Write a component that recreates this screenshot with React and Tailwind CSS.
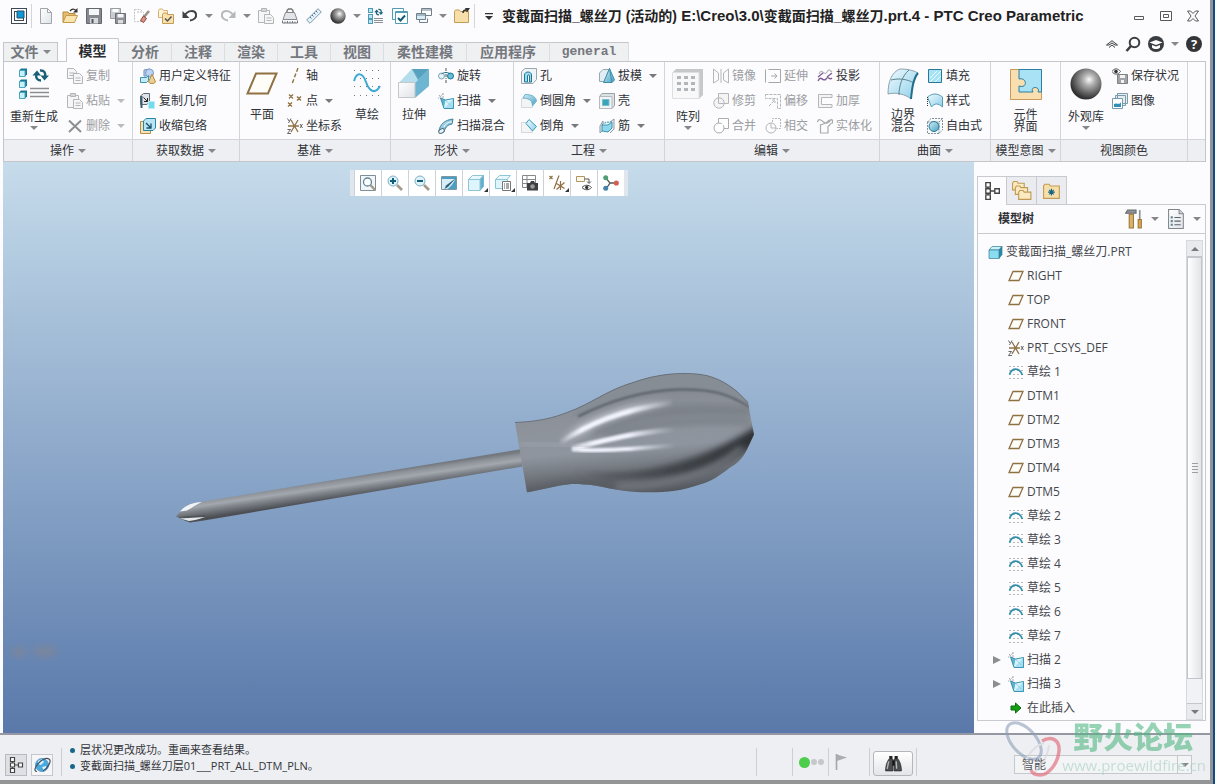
import React, { useState } from 'react';
import { clsx } from 'clsx';

const TEAL = '#1b7895';
const SKY = '#b9e4f4';
const TAN = '#8f7143';
const GRAY = '#8b8d90';

const Defs = () => (
  <svg width="0" height="0" className="absolute" aria-hidden="true">
    <defs>
      <radialGradient id="ball" cx="0.6" cy="0.36" r="0.62">
        <stop offset="0" stopColor="#fafafa" />
        <stop offset="0.3" stopColor="#b0b0b0" />
        <stop offset="0.7" stopColor="#666666" />
        <stop offset="1" stopColor="#303030" />
      </radialGradient>
      <linearGradient id="ice" x1="0" y1="0" x2="1" y2="1">
        <stop offset="0" stopColor="#eefaff" />
        <stop offset="1" stopColor="#8ed0e8" />
      </linearGradient>
      <linearGradient id="deep" x1="0" y1="0" x2="1" y2="1">
        <stop offset="0" stopColor="#d4effa" />
        <stop offset="1" stopColor="#4a9fc0" />
      </linearGradient>
      <linearGradient id="paper" x1="0" y1="0" x2="1" y2="1">
        <stop offset="0" stopColor="#ffffff" />
        <stop offset="1" stopColor="#dfe3e7" />
      </linearGradient>
    </defs>
  </svg>
);

const sheet = <path d="M2.500.5h7l4 4v11h-11z M9.500.5v4h4" fill="url(#paper)" stroke="#a2a6ab" />;
const folder = <path d="M.5 3.500l1-1.500h4l1 1.500h8v11H.5z" fill="#f6dfab" stroke="#c49c55" />;
const arrows = (
  <>
    <path d="M9 12.500C5 12.500 3.500 9.500 4.500 6.500M8 2.500C12 2 14 5 13 8.500" fill="none" stroke="#176178" strokeWidth="2.400" />
    <path d="M.5 7.500L5 2.500l4 5z M17 7.500L12.500 12.500l-4-5z" fill="#176178" />
  </>
);

const icons = {
  app: (
    <>
      <rect x=".5" y=".5" width="15" height="15" fill="#fff" stroke="#3c4854" />
      <rect x="3.500" y="3.500" width="9" height="9" fill="#fff" stroke="#3c4854" />
      <path d="M6 3h7v7H6z" fill="#0a9ad8" stroke="#27506c" />
    </>
  ),
  file: sheet,
  open: (
    <>
      <path d="M1 14V4h5l1 1.500h6V8" fill="#e5bd6c" stroke="#b58a3e" />
      <path d="M1 14.500L4 7.500h11.500l-3 7z" fill="#fae4ae" stroke="#c39a4e" />
      <path d="M8 3c2-2.500 4-2.500 6-.5" fill="none" stroke="#333" strokeWidth="1.300" />
      <path d="M15.500 0v4.500H11z" fill="#333" />
    </>
  ),
  save: (
    <>
      <path d="M.5.5h15v15H.5z" fill="#868a90" stroke="#63676d" />
      <path d="M3 1h10v6H3z" fill="#f5f6f8" />
      <path d="M4 10h8v5.500H4z" fill="#d8dadd" />
      <path d="M5.500 11h2v4h-2z" fill="#555" />
    </>
  ),
  saveAs: (
    <>
      <path d="M.5.5h10v10H.5z" fill="#c9ccd0" stroke="#999da3" />
      <path d="M2.500 1h6v3h-6z" fill="#fff" />
      <path d="M5.500 5.500h10v10h-10z" fill="#8f9399" stroke="#6b6f75" />
      <path d="M7.500 6h6v3.500h-6z" fill="#f5f6f8" />
      <path d="M8 12h5v3.500H8z" fill="#ddd" />
    </>
  ),
  erase: (
    <>
      <path d="M.5 1.500h6l3 3v9h-9z M3 4h5" fill="#fff" stroke="#bcc0c4" strokeDasharray="2 1" />
      <path d="M15 3l-5 6" stroke="#9a9085" strokeWidth="2.500" />
      <path d="M9.500 8l3 2.500-3 4-3-2z" fill="#d9958a" stroke="#8c3f35" />
    </>
  ),
  folderCheck: (
    <>
      <path d="M.5 2.500l1-1.500h3l1 1.500h4v7h-9z" fill="#fff4d6" stroke="#d2b074" />
      <path d="M4.500 6.500l1-1.500h3l1 1.500h6v9h-11z" fill="#f8e1aa" stroke="#c49c55" />
      <path d="M7 10.500l2.500 2.500 4-4.500" fill="none" stroke="#555" strokeWidth="1.500" />
    </>
  ),
  undo: (
    <>
      <path d="M3 7c3-5 10-5 11-1 .8 3.500-2 6-6 6.500" fill="none" stroke="#3e4348" strokeWidth="2" />
      <path d="M.5 3v7h7z" fill="#3e4348" />
    </>
  ),
  redo: (
    <g transform="matrix(-1 0 0 1 16 0)">
      <path d="M3 7c3-5 10-5 11-1 .8 3.500-2 6-6 6.500" fill="none" stroke="#b6b9bc" strokeWidth="2" />
      <path d="M.5 3v7h7z" fill="#b6b9bc" />
    </g>
  ),
  paste: (
    <g stroke="#b3b5b8" fill="#f6f6f7">
      <path d="M.5 2.500h11v12H.5z" />
      <path d="M3.500.5h5v3h-5z" fill="#d5d6d8" />
      <path d="M6.500 6.500h6l3 3v6h-9z" />
      <path d="M8.500 10h5M8.500 12.500h5" />
    </g>
  ),
  copy: (
    <g stroke="#b3b5b8" fill="#f6f6f7">
      <path d="M.5.5h6l3 3v7h-9z M2.500 5h5M2.500 7.500h5" />
      <path d="M6.500 5.500h6l3 3v7h-9z M8.500 10h5M8.500 12.500h5" />
    </g>
  ),
  remove: <path d="M2 2.500l12 11.500M14 2.500L2 14" stroke="#8d8f92" strokeWidth="2" />,
  weight: (
    <>
      <path d="M5 5V2.500L6.500 1h3L11 2.500V5" fill="none" stroke="#777" strokeWidth="1.400" />
      <path d="M3.500 4.500h9L15 11.500H1z" fill="#e2e4e7" stroke="#85898e" />
      <path d="M.5 15v-2.500M3 15v-1.500M5.500 15v-2M8 15v-1.500M10.500 15v-2M13 15v-1.500M15.500 15v-2.500M.5 15h15" stroke="#70757b" fill="none" />
    </>
  ),
  ruler: (
    <>
      <path d="M.7 12L12 .7 15.300 4 4 15.300z" fill="#e3f2fa" stroke="#7c96a8" />
      <path d="M4 9l1.500 1.500M6 7l1.500 1.500M8 5l1.500 1.500M10 3l1.500 1.500" stroke="#4e7188" />
    </>
  ),
  sphere: <circle cx="8" cy="8" r="7.700" fill="url(#ball)" />,
  regen: (
    <>
      {[0, 6, 11].map(y => <rect key={y} x=".5" y={y + 0.5} width="4" height="4" fill={SKY} stroke="#4d9bb2" />)}
      <path d="M6 10.500h9M6 12.500h9M6 14.500h9" stroke="#8a8f95" />
      <g transform="translate(6 0) scale(.55)">{arrows}</g>
    </>
  ),
  windowCheck: (
    <>
      <path d="M.5.5h11v11H.5z" fill="#fff" stroke="#4f9cb3" />
      <path d="M3.500 3.500h12v12h-12z" fill="#fff" stroke="#4f9cb3" />
      <path d="M3.500 4.500h12" stroke="#4f9cb3" />
      <path d="M6 10l2.500 2.500L13 7.500" fill="none" stroke="#115d75" strokeWidth="2" />
    </>
  ),
  windows: (
    <g fill="#fff" stroke="#70818e">
      <path d="M5.500.5h10v7h-10z M5.500 2h10" />
      <path d="M.5 5.500h9v6h-9z M.5 7h9" fill="#d8edf6" />
      <path d="M3.500 11.500v3h8v-4" fill="none" />
    </g>
  ),
  folderClose: (
    <>
      {folder}
      <path d="M9 5c0-2 1-3 3-3" stroke="#333" strokeWidth="1.400" fill="none" />
      <path d="M11 0h5l-3 4.500z" fill="#333" />
    </>
  ),
  userFeature: (
    <>
      <path d="M4 2l6-1v7H4z" fill="#c8daf0" stroke="#6b8fbb" />
      <circle cx="9.500" cy="5" r="4" fill="#bcd3f1" stroke="#7b9cc8" />
      <path d="M.5 9.500h6l2-2v5l-2 2h-6z" fill="#c2ebf5" stroke="#3b93ae" />
      <path d="M12 6l3.500 8c-1.500 2-5.500 2-7 0z" fill="#ebcf94" stroke="#b38b45" />
    </>
  ),
  copyGeometry: (
    <>
      <path d="M.5 3l3-2.500h6V9l-2.500 2.500H.5z" fill="#dfe3e7" stroke="#5c6c78" />
      <path d="M.5 3h2v12h-2z" fill="#3f6074" />
      <path d="M3.500 4.500l4 4M7.500 5v3.500H4" stroke="#222" fill="none" />
      <path d="M8.500 8.500h6v7h-6z" fill="#72dcee" stroke="#b9edf5" />
    </>
  ),
  shrinkwrap: (
    <>
      <path d="M.5 3.500h10v12H.5z" fill="#f7e2b6" stroke="#b98e47" />
      <path d="M3.500 3l2.500-2.500h9.500V10L13 12.500H3.500z" fill={SKY} stroke="#2c86a2" />
      <path d="M6 5l5 5M11 5.500V10H6.500" stroke="#16506a" fill="none" strokeWidth="1.300" />
    </>
  ),
  axis: <path d="M11 0L5 16" stroke={TAN} strokeWidth="1.400" strokeDasharray="4 2" />,
  point: (
    <path d="M2 1.500l4 4M6 1.500l-4 4M10 3.500l4 4M14 3.500l-4 4M1 9.500l4 4M5 9.500l-4 4" stroke={TAN} strokeWidth="1.300" />
  ),
  csys: (
    <>
      <path d="M4 2l7 12M11 2L4 14M1 8h11" stroke={TAN} strokeWidth="1.300" />
      <path d="M.5.5L2 3M4 .5L1.500 5M.5 11.500H3.500L.5 15.500H4M13 6l2.500 4M15.500 6l-2.500 4" stroke="#555" fill="none" strokeWidth=".9" />
    </>
  ),
  revolve: (
    <>
      <ellipse cx="3.500" cy="8" rx="3" ry="3" fill="#e3f4fa" stroke="#7fa3b2" />
      <ellipse cx="12.500" cy="8" rx="3" ry="3" fill="#68bed8" stroke={TEAL} />
      <path d="M3.500 6c3-2 6-2 9 0" fill="none" stroke={TEAL} />
      <path d="M8 0v16" stroke="#555" strokeDasharray="3 1 1 1" />
    </>
  ),
  sweep: (
    <>
      <path d="M2.500 5l5 2 8-1.500v10H6z" fill="#a8e0f1" />
      <path d="M2.500 5l5 2L6 15.500z" fill="#5fb3cf" />
      <path d="M7.500 7l8-1.500L6 15.500z" fill="#d8f4fb" />
      <path d="M7.500 7l8 8.500" stroke="#8fc9dc" strokeWidth=".8" />
      <path d="M2.500 5l5 2 8-1.500v10H6z" fill="none" stroke="#2a8bab" strokeWidth=".9" />
      <path d="M0 5.500L5 1M1 2l4 5M5 0v5" stroke="#8b9298" strokeWidth=".8" strokeDasharray="2 1" />
    </>
  ),
  sweptBlend: (
    <>
      <path d="M1 13c1-7 6-11 14-12l-1 5c-5 1-7 4-8 8z" fill="url(#deep)" stroke="#39829b" />
      <ellipse cx="3.500" cy="13" rx="3" ry="2" fill="#e5f4f9" stroke="#50717f" transform="rotate(-30 3.500 13)" />
      <path d="M6 9c2-4 5-5 8-5" fill="none" stroke="#fff" />
    </>
  ),
  hole: (
    <>
      <path d="M.5 3.500L4 .5h11.500v11l-3.500 4H.5z" fill="#eef4f7" stroke="#9ba5ac" />
      <path d="M3.500 14V7c0-4 7-4 7 0v7z" fill="#9edced" stroke={TEAL} />
      <path d="M6.500 14V8c0-1.500 2-1.500 2 0v6" fill="#fff" stroke={TEAL} />
    </>
  ),
  round: (
    <>
      <path d="M.5 5.500h6c4 0 5 3 5 9H.5z" fill="#f2f4f5" stroke="#d5d9dc" />
      <path d="M4 1.500c8 0 11 3 11.500 6.500l-4 5C11.500 8 9 5.500 2 5z" fill="url(#deep)" stroke="#6cb4cb" />
    </>
  ),
  chamfer: (
    <>
      <path d="M.5 4.500h6l5 5v5H.5z" fill="#f2f4f5" stroke="#d5d9dc" />
      <path d="M8 1.500l7.500 7-4 4.500L5 5.500z" fill="url(#ice)" stroke="#3a9ab8" />
    </>
  ),
  draft: (
    <>
      <path d="M.5 5L4 1.500h6l-4 12H.5z" fill="#e1edf3" stroke="#96a9b3" />
      <path d="M10.500.5l5 11.500-2.500 2.500H4.500z" fill="url(#deep)" stroke="#3a8faa" />
      <path d="M10.500.5l2.500 14" stroke="#3a8faa" />
    </>
  ),
  shell: (
    <>
      <path d="M.5 3.500L3 .5h12.500v12l-2.500 3H.5z" fill="#dde2e5" stroke="#9aa1a7" />
      <path d="M.5 3.500H13v12H.5z" fill="#f1f3f5" stroke="#b5babe" />
      <path d="M3.500 6.500H10v6H3.500z" fill="#3aa5b8" stroke="#74bfcb" />
    </>
  ),
  rib: (
    <>
      <path d="M1 8l3-5v9l-3 3z M10 5l5-4v10l-4 4" fill="#eef1f3" stroke="#8b98a0" />
      <path d="M3 13V7h6l4-3v6l-4 4z" fill="#8fd7ec" stroke="#3d93ad" />
      <path d="M3 7l4-3h6" fill="#c9effa" stroke="#3d93ad" strokeDasharray="2 1" />
    </>
  ),
  mirror: <path d="M.5 1v14l5-3V5z M15.500 1v14l-5-3V5z M8 1v14" fill="#fafafa" stroke="#b4b6b9" />,
  extend: <path d="M3.500 1.500h12v13h-12M.5 1.500v13M6 8h6M9.500 5.500L12 8l-2.500 2.500" fill="none" stroke="#a4a6a9" />,
  project: (
    <>
      <path d="M2 6c3-7 5 3 8-2s3 1 5-1" fill="none" stroke="#b9b4bd" strokeWidth="1.200" />
      <path d="M1 13c3-7 5 2 8-2s3 2 6-1M1 9l5-4M10 9l5-4" fill="none" stroke="#7b5a8f" strokeWidth="1.300" />
    </>
  ),
  trim: (
    <g fill="#f4f4f5" stroke="#b4b6b9">
      <path d="M5.500.5h10v10h-10z" />
      <circle cx="6" cy="10" r="5.200" />
      <path d="M5.500 5v5.500H11" />
    </g>
  ),
  offset: <path d="M.5 1.500h15v14h-3V5.500h-12z M4 13l6-6M7 7h3v3" fill="none" stroke="#b4b6b9" strokeDasharray="3 1" />,
  thicken: <path d="M15 1.500H1.500v13H15v-3H4.500v-7H15z" fill="#f4f4f5" stroke="#b4b6b9" />,
  merge: (
    <g fill="#fff" stroke="#aaacaf">
      <path d="M5.500.5h10v10h-10z" />
      <circle cx="6" cy="10" r="5" />
      <path d="M6 6h4v4H6z" stroke="none" />
    </g>
  ),
  intersect: (
    <g fill="none" stroke="#b4b6b9">
      <path d="M7.500 4V.5h8v10h-4" strokeDasharray="2 1" />
      <circle cx="6" cy="10" r="5" />
      <path d="M6 5v5h5" />
    </g>
  ),
  solidify: <path d="M3.500 15V7l4-1.500c3 0 2-4 8-3.500v3c-3 0-2 2.500-4.500 3.500v6.500z M.5 4c1-4 4-2 6 0s5 2 8-3" fill="none" stroke="#a9abae" strokeWidth="1.200" />,
  fill: (
    <>
      <path d="M1.500 1.500h13v13h-13z" fill="#a6e3f5" stroke="#2c7894" />
      <path d="M3 10l7-7M3 14L14 3M8 14l6-6" stroke="#eefbff" />
    </>
  ),
  style: (
    <>
      <path d="M.5 4c5-4 10-4 15 0v10c-4-4-8-4-11 0z" fill="url(#ice)" stroke="#5a9cb5" />
      <path d="M.5 4v10" stroke="#333" strokeDasharray="1 1" />
    </>
  ),
  freestyle: (
    <>
      <path d="M.5 4L4 .5h11.500V12L12 15.500H.5z M.5 4H12v11.500M12 4l3.500-3.500" fill="none" stroke="#7c8f9b" strokeDasharray="2 1" />
      <circle cx="7" cy="8.500" r="5" fill="url(#deep)" stroke={TEAL} />
    </>
  ),
  saveStatus: (
    <>
      <path d="M0 3.500c2-3.500 6-3.500 8.500 0C6 7 2 7 0 3.500z" fill="#fff" stroke="#555" />
      <circle cx="4" cy="3.500" r="1.800" fill="#333" />
      <path d="M5.500 6.500h10v9h-10z" fill="#a0a4a9" stroke="#7d8186" />
      <path d="M8 7h5v3H8z M9 12h3v3H9z" fill="#f3f3f3" />
    </>
  ),
  images: (
    <>
      <path d="M5.500.5h10v10h-10z M3.500 2.500h10v10h-10z" fill="#e6edf1" stroke="#7b9aaa" />
      <path d="M.5 5.500h10v10H.5z" fill="#fff" stroke="#7b9aaa" />
      <path d="M2 11c3-2 5 2 7-2v5H2z" fill="#2f8fb5" />
    </>
  ),
  zoomFit: (
    <>
      <path d="M.5.5h15v15H.5z" fill="#f1f6f9" stroke="#7f8d97" />
      <circle cx="7.500" cy="7" r="4" fill="#fff" stroke="#5f8799" strokeWidth="1.300" />
      <path d="M10.500 10l4.500 5" stroke="#a39a8c" strokeWidth="2.500" />
    </>
  ),
  zoomIn: (
    <>
      <circle cx="6" cy="6" r="5" fill="#dff3fa" stroke="#7fb0c2" />
      <path d="M3 6h6M6 3v6" stroke="#135e78" strokeWidth="2" />
      <path d="M10 10l5 5" stroke="#a39a8c" strokeWidth="2.600" />
    </>
  ),
  zoomOut: (
    <>
      <circle cx="6" cy="6" r="5" fill="#dff3fa" stroke="#7fb0c2" />
      <path d="M3 6h6" stroke="#135e78" strokeWidth="2" />
      <path d="M10 10l5 5" stroke="#a39a8c" strokeWidth="2.600" />
    </>
  ),
  repaint: (
    <>
      <path d="M.5 1.500h15v13H.5z" fill="#d8ecf5" stroke="#7d96a4" />
      <path d="M15 2v12H6c3-1 7-6 9-12z" fill="#4b9fc0" />
      <path d="M1 2h14v2H1z" fill="#4b9fc0" />
      <path d="M15 3L7 12l-3.500 2L5 10.500z" fill="#2f617a" />
    </>
  ),
  cube: (
    <>
      <path d="M.5 4.500l4-4h11l-3.500 4z" fill="#e6f8fe" stroke="#8cc4d8" />
      <path d="M12 4.500L15.500.5v11l-3.500 4z" fill="#5fb0cd" stroke="#7db7cc" />
      <path d="M.5 4.500H12v11H.5z" fill="#dff5fc" stroke="#8cc4d8" />
    </>
  ),
  savedViews: (
    <>
      <path d="M.5 4.500l4-4h11l-3.500 4z" fill="#e6f8fe" stroke="#8cc4d8" />
      <path d="M.5 4.500h12v9H.5z" fill="#dff5fc" stroke="#8cc4d8" />
      <path d="M7.500 6.500h8v9h-8z" fill="#fff" stroke="#777" />
      <path d="M9 9h1M11 9h3M9 11h1M11 11h3M9 13h1M11 13h3" stroke="#555" />
    </>
  ),
  viewManager: (
    <>
      <path d="M.5.5h13v12H.5z M.5 4.500h13M.5 8.500h13M5 .5v12" fill="#fff" stroke="#888" />
      <path d="M5 8h3l1-2h3l1 2h3v7.500H5z" fill="#3b3f43" />
      <circle cx="10.500" cy="11.500" r="2.300" fill="#999" />
    </>
  ),
  datumFilter: (
    <path d="M.5 1l3 3M3.500 1l-3 3M10 .5L5 14M11.500 6v9M7.500 8.500l8 5M15.500 7.500l-8 7" stroke={TAN} strokeWidth="1.200" />
  ),
  annotation: (
    <>
      <path d="M.5 1.500h8v5h-8z" fill="#fff9ec" stroke="#b39663" />
      <path d="M8.500 4H13v4M11 6.500l2 2 2-2" fill="none" stroke="#555" />
      <path d="M6 12.500c2.500-3 7-3 9.500 0-2.500 3-7 3-9.500 0z" fill="#fff" stroke="#444" />
      <circle cx="10.700" cy="12.500" r="1.700" fill="#333" />
    </>
  ),
  spin: (
    <>
      <path d="M2.500 2.500L7 8l-4 6M7 8h7" fill="none" stroke="#555" strokeWidth="1.300" />
      <circle cx="2.700" cy="2.700" r="2.500" fill="#4f9f74" />
      <circle cx="2.700" cy="13.300" r="2.500" fill="#4583ad" />
      <circle cx="13.300" cy="8" r="2.600" fill="#d45f55" />
    </>
  ),
  tree: (
    <path d="M2.500.5h4v4h-4z M2.500 6h4v4h-4z M2.500 11.500h4v4h-4z M10.500 6h4v4h-4z M4.500 4.500V6M4.500 10v1.500M6.500 8h4" fill="#fff" stroke="#444" strokeWidth="1.200" />
  ),
  folders: (
    <g fill="#fbeac0" stroke="#c09a55">
      <path d="M.5 2l1-1.500h3l1 1.500H11v6H.5z" />
      <path d="M3 6l1-1.500h3L8 6h6v6H3z" />
      <path d="M6 10l1-1.500h3L11 10h6v6.500H6z" />
    </g>
  ),
  favorites: (
    <>
      {folder}
      <path d="M7.500 6v6M4.500 9h6M5.500 7l4 4M9.500 7l-4 4" stroke="#176480" />
    </>
  ),
  tools: (
    <>
      <path d="M.5 4l2-3h8v3z" fill="#8d9298" stroke="#65696d" />
      <path d="M4 5h4v13H4z" fill="#d9b36a" stroke="#9a7433" />
      <path d="M14 1v9" stroke="#8c9196" strokeWidth="1.600" />
      <path d="M12.500 10h3v8h-3z" fill="#dba94f" stroke="#9a7433" />
    </>
  ),
  settings: (
    <>
      <path d="M1.500.5h10l4 4v14h-14z" fill="url(#paper)" stroke="#80868c" />
      <path d="M11.500.5v4h4" fill="#cdd4da" stroke="#80868c" />
      <path d="M7 8h6M7 11.500h6M7 15h6" stroke="#5c646b" />
      <path d="M3.500 7h2v2h-2z M3.500 10.500h2v2h-2z M3.500 14h2v2h-2z" fill="#5c8396" />
    </>
  ),
  part: (
    <>
      <path d="M2 6l3-3.500h10l-3 3.500z" fill="#c9f1fa" stroke="#357e96" strokeWidth=".7" />
      <path d="M12 6l3-3.500v8l-3 4z" fill="#2589aa" stroke="#357e96" strokeWidth=".7" />
      <path d="M2 6h10v8.500H2z" fill="#8adcf0" stroke="#357e96" strokeWidth=".7" />
    </>
  ),
  plane: <path d="M5 3.500h10L11 12.500H1z" fill="#fffdf8" stroke={TAN} strokeWidth="1.300" />,
  sketch: (
    <>
      <path d="M1.500 2.500h14M1.500 6.500h14M1.500 10.500h14M1.500 14.500h14" stroke="#777" strokeDasharray="1 3" />
      <path d="M1.500 10.500C4 3.500 11 3 14.500 11" fill="none" stroke="#2d8fab" strokeWidth="1.700" />
    </>
  ),
  insert: <path d="M3 6h4.500V3L13 8l-5.500 5V10H3z" fill="#12a012" stroke="#0a6f0a" />,
  globe: (
    <>
      <circle cx="9" cy="9" r="6.500" fill="#49a9dd" stroke="#5aa0cc" />
      <path d="M5 5l4-2 2 3-3 3-3-1z M9 11l4-1 1 2-3 3z" fill="#d5f0fb" />
      <path d="M4 15.500C-3 15 10-1 16 3c3 2-1 9-6 12" fill="none" stroke="#3c4f5f" strokeWidth="1.200" />
    </>
  ),
  binoculars: (
    <>
      <path d="M4 1h3v3H4z M9 1h3v3H9z" fill="#222" />
      <path d="M3.500 4h4v11H.5c0-4 1-8 3-11z M8.500 4h4c2 3 3 7 3 11h-7z" fill="#4b4e51" stroke="#222" strokeWidth=".6" />
      <path d="M7 5h2v5H7z" fill="#111" />
      <path d="M2 13l1.500-7M10.500 6l.5 7" stroke="#b5b8ba" strokeWidth="1.300" />
    </>
  ),
};

const bigIcons = {
  regen: (
    <>
      {[0, 11, 22].map(y => (
        <g key={y} transform={`translate(0 ${y})`}>
          <path d="M1 2.500L3 .5h6v6l-2 2H1z" fill={TEAL} />
          <path d="M1.500 2.500H7v6H1.500z" fill="#c8f0fa" stroke="#4aa6c0" />
        </g>
      ))}
      <path d="M12 20.500h19M12 24.500h19M12 28.500h19" stroke="#8a8d91" strokeWidth="1.300" />
      <g transform="translate(14 0)">{arrows}</g>
    </>
  ),
  plane: <path d="M10 5.500h20.500L22 25.500H1.500z" fill="#fffdf8" stroke={TAN} strokeWidth="2" />,
  sketch: (
    <>
      <path d="M3 2.500h26M3 10.500h26M3 18.500h26M3 27.500h26" stroke="#777" strokeDasharray="1 5" />
      <path d="M3 13C6 3 12 5 15 14s9 13 14 4" fill="none" stroke="#3ba9d3" strokeWidth="2" />
    </>
  ),
  extrude: (
    <>
      <path d="M1 15L14 1h17L17 15z" fill="#8cc8df" />
      <path d="M1 15L14 1l8 9-5 5z" fill="#c5e6f2" opacity=".7" />
      <path d="M17 15L31 1v17L17 30z" fill="#6db5d0" />
      <path d="M14 1h17L20 12z" fill="#3f8fb2" opacity=".7" />
      <path d="M.5 14.500H17v15H.5z" fill="url(#paper)" stroke="#c3c7ca" />
    </>
  ),
  pattern: (
    <>
      <path d="M1 4l3-3h27v26l-4 4z" fill="#c6c8ca" />
      <path d="M.5 4.500H27v26H.5z" fill="#f8f8f9" stroke="#dcdee0" />
      {[8, 14, 20].map(y => (
        <path key={y} d={`M5 ${y}h4v3H5z M12 ${y}h4v3h-4z M19 ${y}h4v3h-4z`} fill="#b3b6b9" />
      ))}
    </>
  ),
  boundary: (
    <>
      <path d="M1 26C1 13 5 4 13 1c7 0 13 1 18 4-5 6-6 16-7 26-6-5-15-7-23-5z" fill="url(#ice)" stroke="#8fa3ae" />
      <path d="M4 12c8-2 16-1 23 3M22 2c-7 6-10 16-10 25" fill="none" stroke="#5b8294" />
      <path d="M31 5c-5 6-6 16-7 26" fill="none" stroke="#226f8d" strokeWidth="2" />
    </>
  ),
  component: (
    <>
      <path d="M.5 1.500h31v30H.5z" fill="#f9dfb0" stroke="#c69a5b" />
      <path d="M9 1.500h22.500V24H28c3-6-9-6-5 0H9v-6c9 3 8-9 0-7z" fill="#a9e2f5" stroke="#2b7f9e" />
    </>
  ),
  appearance: <circle cx="16" cy="16" r="15.500" fill="url(#ball)" />,
};

const Icon = ({ name, className = 'h-4 w-4', box = 16 }) => (
  <svg viewBox={`0 0 ${box} ${box}`} className={clsx('shrink-0', className)} aria-hidden="true">
    {icons[name]}
  </svg>
);

const Caret = ({ className = 'text-[#85878b]' }) => (
  <svg viewBox="0 0 8 4" className={clsx('h-1 w-2 shrink-0', className)} aria-hidden="true">
    <path d="M0 0h8L4 4z" fill="currentColor" />
  </svg>
);

const quickAccess = [
  { icon: 'file', label: '新建' },
  { icon: 'open', label: '打开' },
  { icon: 'save', label: '保存' },
  { icon: 'saveAs', label: '另存为' },
  { icon: 'erase', label: '拭除' },
  { icon: 'folderCheck', label: '工作目录' },
  { icon: 'undo', label: '撤消', caret: true },
  { icon: 'redo', label: '重做', caret: true },
  { icon: 'paste', label: '粘贴' },
  { icon: 'weight', label: '质量属性' },
  { icon: 'ruler', label: '测量' },
  { icon: 'sphere', label: '外观', caret: true },
  { icon: 'regen', label: '重新生成' },
  { icon: 'windowCheck', label: '激活窗口' },
  { icon: 'windows', label: '窗口', caret: true },
  { icon: 'folderClose', label: '关闭' },
];

const TitleBar = () => (
  <header className="flex h-8 items-center pl-[11px] pr-1">
    <Icon name="app" />
    <span className="ml-1 h-6 w-px bg-[#d4d5d9]" />
    <div className="ml-0.5 flex items-center">
      {quickAccess.map(item => (
        <React.Fragment key={item.icon}>
          <button type="button" aria-label={item.label} className="grid h-6 w-6 place-items-center">
            <Icon name={item.icon} />
          </button>
          {item.caret && (
            <button type="button" aria-label={`${item.label}选项`} className="grid h-6 w-[14px] place-items-center">
              <Caret />
            </button>
          )}
        </React.Fragment>
      ))}
    </div>
    <span className="h-6 w-px bg-[#d4d5d9]" />
    <button type="button" aria-label="自定义快速访问工具栏" className="grid h-6 w-[27px] place-items-center">
      <svg viewBox="0 0 8 7" className="h-[7px] w-2"><path d="M0 0h8v1.200H0z M0 3h8L4 7z" fill="#333" /></svg>
    </button>
    <h1 className="min-w-0 flex-1 truncate font-['Liberation_Sans','Noto_Sans_CJK_SC',sans-serif] text-[15px] font-bold leading-5 text-[#222]">
      <span className="text-[14px]">变截面扫描_螺丝刀 (活动的)</span>
      {' E:\\Creo\\3.0\\'}
      <span className="text-[14px]">变截面扫描_螺丝刀</span>
      .prt.4 - PTC Creo Parametric
    </h1>
    <button type="button" aria-label="最小化" className="grid h-6 w-[27px] place-items-center">
      <svg viewBox="0 0 10 10" className="h-[10px] w-[10px]"><path d="M.5 5.500h9v3h-9z" fill="none" stroke="#55585c" /></svg>
    </button>
    <button type="button" aria-label="最大化" className="grid h-6 w-[27px] place-items-center">
      <svg viewBox="0 0 12 10" className="h-[10px] w-3"><path d="M.5.5h11v9H.5z M3.500 3.500h5v3h-5z" fill="none" stroke="#55585c" /></svg>
    </button>
    <button type="button" aria-label="关闭窗口" className="grid h-6 w-[27px] place-items-center">
      <svg viewBox="0 0 12 12" className="h-3 w-3"><path d="M.5 1h3L6 3.500 8.500 1h3L8 6l3.500 5h-3L6 8.500 3.500 11h-3L4 6z" fill="none" stroke="#55585c" /></svg>
    </button>
  </header>
);

const tabs = [
  { label: '模型', width: 'w-[53px]' },
  { label: '分析', width: 'w-[53px]' },
  { label: '注释', width: 'w-[53px]' },
  { label: '渲染', width: 'w-[53px]' },
  { label: '工具', width: 'w-[53px]' },
  { label: '视图', width: 'w-[53px]' },
  { label: '柔性建模', width: 'w-[83px]' },
  { label: '应用程序', width: 'w-[83px]' },
  { label: 'general', width: 'w-[79px]', mono: true },
];

const TabRow = ({ active, onSelect }) => (
  <nav className="flex h-[29px] items-end pl-[3px] pr-1 text-[14px] font-bold text-[#74777d]">
    <button type="button" className="flex h-[19px] w-[55px] items-center justify-center gap-1 border border-b-0 border-[#c5c6ca] bg-[#eff0f2] leading-[18px]">
      文件
      <Caret />
    </button>
    <div className="ml-2 flex items-end">
      {tabs.map(tab => (
        <button
          key={tab.label}
          type="button"
          onClick={() => onSelect(tab.label)}
          className={clsx(
            'border-t border-[#c5c6ca]',
            tab.width,
            tab.mono && "font-['Liberation_Mono',monospace] text-[13px]",
            active === tab.label
              ? 'relative z-10 -mb-px h-6 rounded-t-[2px] border-x bg-[#fcfcfe] text-[#2c2e33]'
              : 'h-[19px] border-r border-r-[#dcdde0] bg-[#eff0f2] leading-[18px]'
          )}
        >
          {tab.label}
        </button>
      ))}
    </div>
    <div className="ml-auto flex h-full items-center pb-[5px]">
      <button type="button" aria-label="最小化功能区" className="grid h-5 w-5 place-items-center">
        <svg viewBox="0 0 12 8" className="h-2 w-3"><path d="M.5 5L6 .7 11.500 5H9L6 3 3 5z M3 7.500L6 5l3 2.500" fill="none" stroke="#3c3f44" /></svg>
      </button>
      <button type="button" aria-label="搜索" className="grid h-5 w-[22px] place-items-center">
        <svg viewBox="0 0 16 16" className="h-4 w-4"><circle cx="9.500" cy="6.500" r="4.800" fill="none" stroke="#3a3d42" strokeWidth="2" /><path d="M6 10l-4.500 5" stroke="#3a3d42" strokeWidth="2.600" /></svg>
      </button>
      <button type="button" aria-label="学习中心" className="grid h-5 w-6 place-items-center">
        <svg viewBox="0 0 16 16" className="h-4 w-4"><circle cx="8" cy="8" r="8" fill="#3a3d42" /><path d="M1.500 6.500L8 4l6.500 2.500L8 9z M4 9l4 1.500L12 9v2.500c-2 2-6 2-8 0z" fill="#fff" /></svg>
      </button>
      <span className="grid w-[14px] place-items-center"><Caret /></span>
      <button type="button" aria-label="帮助" className="grid h-5 w-6 place-items-center">
        <span className="grid h-4 w-4 place-items-center rounded-full bg-[#333539] text-[13px] leading-4 text-white">?</span>
      </button>
    </div>
  </nav>
);

const Tool = ({ icon, label, caret, disabled }) => (
  <button
    type="button"
    disabled={disabled}
    className={clsx('flex h-[25px] items-center gap-[3px] whitespace-nowrap', disabled ? 'text-[#9b9da1]' : 'text-[#303338]')}
  >
    <Icon name={icon} />
    {label}
    {caret && <span className="ml-1 flex"><Caret className={disabled ? 'text-[#b9bbbe]' : 'text-[#77797d]'} /></span>}
  </button>
);

const Column = ({ items }) => (
  <div className="flex flex-col items-start pt-px">
    {items.map(item => <Tool key={item.label} {...item} />)}
  </div>
);

// twoLine labels wrap after the second character
const BigTool = ({ icon, label, twoLine, caret, className = 'w-8' }) => (
  <button type="button" className={clsx('flex flex-col items-center pt-[6px] text-[#303338]', className)}>
    <svg viewBox="0 0 32 32" className="h-8 w-8 shrink-0" aria-hidden="true">{bigIcons[icon]}</svg>
    <span className={clsx('mt-[9px] leading-3', twoLine ? 'w-6' : 'whitespace-nowrap', caret && 'pt-0.5')}>{label}</span>
    {caret && <span className="mt-[3px] flex"><Caret /></span>}
  </button>
);

const Group = ({ label, caret = true, width, className = 'gap-2 pl-[7px]', children }) => (
  <section className={clsx('flex flex-col border-r border-[#d3d4d8]', width)}>
    <div className={clsx('flex h-[77px] items-start', className)}>{children}</div>
    <div className="flex h-[22px] items-center justify-center gap-1 whitespace-nowrap border-t border-[#d3d4d8] bg-[#eeeff2] text-[#303338]">
      {label}
      {caret && <Caret />}
    </div>
  </section>
);

const Ribbon = () => (
  <div className="ml-[3px] mr-1 flex border border-[#c5c6ca] text-[12px]">
    <Group label="操作" width="w-[129px] shrink-0" className="gap-[6px] pl-[3px]">
      <BigTool icon="regen" label="重新生成" caret className="w-[54px]" />
      <Column
        items={[
          { icon: 'copy', label: '复制', disabled: true },
          { icon: 'paste', label: '粘贴', disabled: true, caret: true },
          { icon: 'remove', label: '删除', disabled: true, caret: true },
        ]}
      />
    </Group>
    <Group label="获取数据" width="w-[107px] shrink-0">
      <Column
        items={[
          { icon: 'userFeature', label: '用户定义特征' },
          { icon: 'copyGeometry', label: '复制几何' },
          { icon: 'shrinkwrap', label: '收缩包络' },
        ]}
      />
    </Group>
    <Group label="基准" width="w-[151px] shrink-0" className="gap-[9px] pl-[6px]">
      <BigTool icon="plane" label="平面" />
      <Column
        items={[
          { icon: 'axis', label: '轴' },
          { icon: 'point', label: '点', caret: true },
          { icon: 'csys', label: '坐标系' },
        ]}
      />
      <BigTool icon="sketch" label="草绘" />
    </Group>
    <Group label="形状" width="w-[123px] shrink-0">
      <BigTool icon="extrude" label="拉伸" />
      <Column
        items={[
          { icon: 'revolve', label: '旋转' },
          { icon: 'sweep', label: '扫描', caret: true },
          { icon: 'sweptBlend', label: '扫描混合' },
        ]}
      />
    </Group>
    <Group label="工程" width="w-[151px] shrink-0">
      <Column
        items={[
          { icon: 'hole', label: '孔' },
          { icon: 'round', label: '倒圆角', caret: true },
          { icon: 'chamfer', label: '倒角', caret: true },
        ]}
      />
      <Column
        items={[
          { icon: 'draft', label: '拔模', caret: true },
          { icon: 'shell', label: '壳' },
          { icon: 'rib', label: '筋', caret: true },
        ]}
      />
    </Group>
    <Group label="编辑" width="w-[215px] shrink-0" className="gap-[9px] pl-[7px]">
      <BigTool icon="pattern" label="阵列" caret />
      <Column
        items={[
          { icon: 'mirror', label: '镜像', disabled: true },
          { icon: 'trim', label: '修剪', disabled: true },
          { icon: 'merge', label: '合并', disabled: true },
        ]}
      />
      <Column
        items={[
          { icon: 'extend', label: '延伸', disabled: true },
          { icon: 'offset', label: '偏移', disabled: true },
          { icon: 'intersect', label: '相交', disabled: true },
        ]}
      />
      <Column
        items={[
          { icon: 'project', label: '投影' },
          { icon: 'thicken', label: '加厚', disabled: true },
          { icon: 'solidify', label: '实体化', disabled: true },
        ]}
      />
    </Group>
    <Group label="曲面" width="w-[111px] shrink-0">
      <BigTool icon="boundary" label="边界混合" twoLine />
      <Column
        items={[
          { icon: 'fill', label: '填充' },
          { icon: 'style', label: '样式' },
          { icon: 'freestyle', label: '自由式' },
        ]}
      />
    </Group>
    <Group label="模型意图" width="w-[70px] shrink-0" className="justify-center">
      <BigTool icon="component" label="元件界面" twoLine />
    </Group>
    <Group label="视图颜色" caret={false} width="w-[127px] shrink-0">
      <BigTool icon="appearance" label="外观库" caret className="w-9" />
      <Column
        items={[
          { icon: 'saveStatus', label: '保存状况' },
          { icon: 'images', label: '图像' },
        ]}
      />
    </Group>
    <div className="flex flex-1 flex-col">
      <div className="h-[77px]" />
      <div className="h-[22px] border-t border-[#d3d4d8] bg-[#eeeff2]" />
    </div>
  </div>
);

const viewTools = [
  { icon: 'zoomFit', label: '重新调整' },
  { icon: 'zoomIn', label: '放大' },
  { icon: 'zoomOut', label: '缩小' },
  { icon: 'repaint', label: '重画' },
  { icon: 'cube', label: '显示样式', more: true },
  { icon: 'savedViews', label: '已保存方向', more: true },
  { icon: 'viewManager', label: '视图管理器' },
  { icon: 'datumFilter', label: '基准显示过滤器', more: true },
  { icon: 'annotation', label: '注释显示' },
  { icon: 'spin', label: '旋转中心' },
];

const Screwdriver = () => (
  <svg viewBox="3 163 971 570" className="absolute inset-0 h-full w-full" role="img" aria-label="螺丝刀模型">
    <defs>
      <linearGradient id="shaft" gradientUnits="userSpaceOnUse" x1="360" y1="475" x2="363" y2="496">
        <stop offset="0" stopColor="#74797f" />
        <stop offset="0.15" stopColor="#8b9097" />
        <stop offset="0.4" stopColor="#a3a8af" />
        <stop offset="0.6" stopColor="#82878d" />
        <stop offset="1" stopColor="#4b4f54" />
      </linearGradient>
      <linearGradient id="grip" gradientUnits="userSpaceOnUse" x1="630" y1="380" x2="640" y2="494">
        <stop offset="0" stopColor="#7f858c" />
        <stop offset="0.3" stopColor="#8d929a" />
        <stop offset="0.6" stopColor="#8f959e" />
        <stop offset="0.8" stopColor="#6f747b" />
        <stop offset="1" stopColor="#54585e" />
      </linearGradient>
      <linearGradient id="shine" gradientUnits="userSpaceOnUse" x1="558" y1="0" x2="676" y2="0">
        <stop offset="0" stopColor="#e8ebf6" stopOpacity="0" />
        <stop offset="0.2" stopColor="#f4f6ff" />
        <stop offset="0.6" stopColor="#f0f2fc" />
        <stop offset="1" stopColor="#d0d4df" stopOpacity="0" />
      </linearGradient>
      <linearGradient id="shade" gradientUnits="userSpaceOnUse" x1="560" y1="0" x2="752" y2="0">
        <stop offset="0" stopColor="#4b5055" stopOpacity="0" />
        <stop offset="0.3" stopColor="#44484d" stopOpacity="0.8" />
        <stop offset="1" stopColor="#2e3135" />
      </linearGradient>
      <clipPath id="gripShape">
        <path d="M515 423C540 422 554 418 567 413C592 404 606 391 633 383C650 377 667 374 683 374C696 374 705 375 713 378C722 381 731 387 737 392L748 403L751 420L754 435L747 450C742 460 737 464 730 468C720 476 711 482 700 485C683 491 667 493 650 493C634 493 622 491 610 489C600 487 592 485 583 485C574 484 567 485 560 486L527 493z" />
      </clipPath>
      <filter id="soft1" x="-20%" y="-40%" width="140%" height="180%"><feGaussianBlur stdDeviation="1.200" /></filter>
      <filter id="soft3" x="-20%" y="-40%" width="140%" height="180%"><feGaussianBlur stdDeviation="3" /></filter>
      <filter id="soft5" x="-20%" y="-40%" width="140%" height="180%"><feGaussianBlur stdDeviation="5" /></filter>
    </defs>
    <path d="M188 505L203 502 522 449.500V467L207 520.500 190 523C184 521 180 519 176 517C180 512 184 508 188 505z" fill="url(#shaft)" />
    <path d="M180 512C185 506 192 503 202 502.500C196 505 191 509 187 511z" fill="#f0f4f6" />
    <path d="M178 517.500L205 515.500 204 517.500 189 519z" fill="#4f5457" />
    <path d="M180 519L205 517.500C199 520 193 521 189 521.500z" fill="#e4eaeb" />
    <g clipPath="url(#gripShape)">
      <path d="M510 365h250v135H510z" fill="url(#grip)" />
      <path d="M572 418C606 400 640 390.500 678 390.500S728 394 752 410V370H590z" fill="#878d95" />
      <path d="M578 417C612 400 645 391 678 390S728 394 750 408" fill="none" stroke="#565b63" strokeWidth="2" filter="url(#soft1)" />
      <path d="M592 432C630 414 676 408 752 412" fill="none" stroke="#747a82" strokeWidth="9" filter="url(#soft5)" />
      <path d="M605 436C640 424 690 420 750 422" fill="none" stroke="#7a8088" strokeWidth="6" filter="url(#soft3)" />
      <path d="M512 494C560 478 590 476 620 480V500H512z" fill="#565a60" opacity=".7" filter="url(#soft5)" />
      <path d="M570 471C630 482 705 462 760 424V442C724 472 670 484 600 478z" fill="url(#shade)" filter="url(#soft3)" />
      <path d="M616 487C664 488 712 474 742 448" fill="none" stroke="#777c82" strokeWidth="5" filter="url(#soft3)" />
      <path d="M560 442C590 424 618 410 672 402" fill="none" stroke="url(#shine)" strokeWidth="9" opacity=".5" filter="url(#soft3)" />
      <path d="M560 443C588 425 618 411 672 403" fill="none" stroke="url(#shine)" strokeWidth="5" filter="url(#soft1)" />
      <path d="M572 449C604 441 628 434 674 430" fill="none" stroke="url(#shine)" strokeWidth="5" filter="url(#soft1)" />
      <path d="M572 450C604 452 634 449 674 446" fill="none" stroke="url(#shine)" strokeWidth="4" filter="url(#soft1)" />
      <path d="M520 444C550 446 570 446 590 446" fill="none" stroke="#a4aab3" strokeWidth="5" opacity=".6" filter="url(#soft3)" />
    </g>
    <path d="M515 423C540 422 554 418 567 413C592 404 606 391 633 383C650 377 667 374 683 374C696 374 705 375 713 378C722 381 731 387 737 392L748 403" fill="none" stroke="#60666d" strokeWidth=".8" />
    <g fill="#8c8585" opacity=".45" filter="url(#soft3)">
      <ellipse cx="19" cy="653" rx="8" ry="5" />
      <ellipse cx="45" cy="652" rx="12" ry="6" />
    </g>
  </svg>
);

const Canvas = () => (
  <main className="relative ml-[3px] flex min-w-0 flex-1 items-start justify-center bg-linear-to-b from-[#c6dceb] to-[#5a79aa] pt-2">
    <Screwdriver />
    <div className="relative flex h-[26px] border-x-4 border-[#dfe6ee] bg-white">
      {viewTools.map(tool => (
        <button key={tool.icon} type="button" aria-label={tool.label} className="relative grid w-[27px] place-items-center border-l border-[#c9d2db]">
          <Icon name={tool.icon} />
          {tool.more && (
            <svg viewBox="0 0 4 4" className="absolute bottom-1 right-px h-1 w-1"><path d="M4 0v4H0z" fill="#333" /></svg>
          )}
        </button>
      ))}
    </div>
  </main>
);

const treeItems = [
  { icon: 'plane', label: 'RIGHT' },
  { icon: 'plane', label: 'TOP' },
  { icon: 'plane', label: 'FRONT' },
  { icon: 'csys', label: 'PRT_CSYS_DEF' },
  { icon: 'sketch', label: '草绘 1' },
  { icon: 'plane', label: 'DTM1' },
  { icon: 'plane', label: 'DTM2' },
  { icon: 'plane', label: 'DTM3' },
  { icon: 'plane', label: 'DTM4' },
  { icon: 'plane', label: 'DTM5' },
  { icon: 'sketch', label: '草绘 2' },
  { icon: 'sketch', label: '草绘 3' },
  { icon: 'sketch', label: '草绘 4' },
  { icon: 'sketch', label: '草绘 5' },
  { icon: 'sketch', label: '草绘 6' },
  { icon: 'sketch', label: '草绘 7' },
  { icon: 'sweep', label: '扫描 2', expandable: true },
  { icon: 'sweep', label: '扫描 3', expandable: true },
  { icon: 'insert', label: '在此插入' },
];

const ScrollBar = () => (
  <div className="mr-[2px] flex w-[17px] flex-col border border-[#d6d8dc] bg-[#f1f2f5]">
    <button type="button" aria-label="向上滚动" className="grid h-4 place-items-center border-b border-[#c4c6cc] bg-[#e9eaee]">
      <Caret className="rotate-180 text-[#77797d]" />
    </button>
    <div className="mb-6 grid flex-1 place-items-center border border-[#c3c5cc] bg-linear-to-r from-white to-[#e3e4e8]">
      <svg viewBox="0 0 8 12" className="h-3 w-2"><path d="M1 1.500h6M1 4.500h6M1 7.500h6M1 10.500h6" stroke="#9b9ea5" /></svg>
    </div>
    <button type="button" aria-label="向下滚动" className="grid h-4 place-items-center border-t border-[#c4c6cc] bg-[#e9eaee]">
      <Caret className="text-[#77797d]" />
    </button>
  </div>
);

const ModelTree = () => (
  <aside className="flex w-[236px] shrink-0 flex-col pb-3 pl-[3px] pr-1 pt-[14px]">
    <div className="flex h-7">
      <button type="button" aria-label="模型树" className="relative z-10 -mb-px grid w-[30px] place-items-center border border-b-0 border-[#c8cad0] bg-[#fcfcfe]">
        <Icon name="tree" className="h-[18px] w-[18px]" />
      </button>
      <button type="button" aria-label="文件夹浏览器" className="grid w-[30px] place-items-center border border-b-0 border-l-0 border-[#c8cad0] bg-[#ebecef]">
        <Icon name="folders" box={18} className="h-5 w-5" />
      </button>
      <button type="button" aria-label="收藏夹" className="grid w-[30px] place-items-center border border-b-0 border-l-0 border-[#c8cad0] bg-[#ebecef]">
        <Icon name="favorites" className="h-[18px] w-[18px]" />
      </button>
    </div>
    <div className="flex flex-1 flex-col border border-[#c8cad0]">
      <div className="flex h-[29px] items-center border-b border-[#c8cad0] pl-5 pr-1">
        <h2 className="flex-1 text-[12px] font-bold text-[#2f3136]">模型树</h2>
        <button type="button" aria-label="工具" className="flex items-center gap-1.5">
          <Icon name="tools" box={19} className="h-5 w-5" />
          <Caret />
        </button>
        <button type="button" aria-label="设置" className="ml-2 flex items-center gap-1.5">
          <Icon name="settings" box={19} className="h-5 w-5" />
          <Caret />
        </button>
      </div>
      <div className="flex flex-1 pt-[6px]">
        <ul className="flex-1 text-[12px] text-[#45474c]">
          <li className="flex h-6 items-center gap-[3px] pl-[9px]">
            <Icon name="part" />
            变截面扫描_螺丝刀.PRT
          </li>
          {treeItems.map(item => (
            <li key={item.label} className="flex h-6 items-center gap-[3px] pl-[15px]">
              <span className="mr-1 w-2">
                {item.expandable && (
                  <button type="button" aria-label={`展开${item.label}`} className="block">
                    <svg viewBox="0 0 8 8" className="h-2 w-2"><path d="M0 0l8 4-8 4z" fill={GRAY} /></svg>
                  </button>
                )}
              </span>
              <Icon name={item.icon} />
              {item.label}
            </li>
          ))}
        </ul>
        <ScrollBar />
      </div>
    </div>
  </aside>
);

const Divider = ({ className }) => <span className={clsx('h-7 w-px bg-[#cdced2]', className)} />;

const Watermark = () => (
  <div className="pointer-events-none absolute -top-[14px] right-1 flex opacity-60">
    <svg viewBox="0 0 58 56" className="h-14 w-[58px]" aria-hidden="true">
      <ellipse cx="20" cy="20" rx="12" ry="22" transform="rotate(-42 20 20)" fill="none" stroke="#8c9fb8" strokeWidth="3" />
      <path d="M22 50C18 40 28 26 40 22M30 52C38 44 44 34 45 24" fill="none" stroke="#d5d3da" strokeWidth="2" />
      <path d="M38 20c9-5 18-2 17 10-1 12-10 24-19 24-5 0-8-2-9-5" fill="none" stroke="#e0606e" strokeWidth="3.500" />
    </svg>
    <div className="flex flex-col items-start whitespace-nowrap">
      <span className="pl-[11px] text-[30px] font-black leading-[32px] text-[#52b884]">野火论坛</span>
      <span className="text-[15px] leading-6 text-[#a5cfc0]">www.proewildfire.cn</span>
    </div>
  </div>
);

const StatusBar = () => (
  <footer className="relative flex h-[47px] shrink-0 items-end border-t-2 border-[#9597a3] bg-[#eeeff2] pb-1 pl-[5px]">
    <button type="button" aria-label="切换模型树" className="grid h-[22px] w-[22px] place-items-center border border-[#b8babf] bg-[#dfe0e4]">
      <Icon name="tree" />
    </button>
    <button type="button" aria-label="切换浏览器" className="ml-1 grid h-[22px] w-[22px] place-items-center border border-[#c5c7cc] bg-[#f6f6f8]">
      <Icon name="globe" box={18} className="h-[18px] w-[18px]" />
    </button>
    <Divider className="ml-2" />
    <ul className="ml-2 flex-1 pb-0.5 text-[11px] leading-4 text-[#33353a]">
      {['层状况更改成功。重画来查看结果。', '变截面扫描_螺丝刀层01___PRT_ALL_DTM_PLN。'].map(text => (
        <li key={text} className="flex items-center gap-[5px] whitespace-nowrap">
          <span className="h-[5px] w-[5px] rounded-full bg-[#1c6685]" />
          {text}
        </li>
      ))}
    </ul>
    <Divider />
    <Divider className="ml-[35px]" />
    <div className="ml-[6px] flex h-7 w-[29px] items-center gap-px">
      <span className="h-[11px] w-[11px] rounded-full bg-[#4cce4c]" />
      <span className="h-[6px] w-[6px] rounded-full bg-[#c6c7ca]" />
      <span className="h-[6px] w-[6px] rounded-full bg-[#c6c7ca]" />
    </div>
    <Divider />
    <svg viewBox="0 0 12 16" className="mb-[6px] ml-[6px] mr-[22px] h-4 w-3" aria-hidden="true">
      <path d="M1.500 0v16" stroke="#a3a5a9" strokeWidth="1.600" />
      <path d="M2 .5l10 3L2 7z" fill="#abadb1" />
    </svg>
    <Divider />
    <button type="button" aria-label="查找" className="mx-[3px] grid h-[25px] w-10 place-items-center rounded-[3px] border border-[#b4b6bb] bg-linear-to-b from-white to-[#e4e5e9]">
      <Icon name="binoculars" className="h-[17px] w-[17px]" />
    </button>
    <Divider />
    <div className="relative mb-0.5 ml-[97px] mr-[18px] w-[178px] border border-[#c6c8cc]">
      <select aria-label="选择过滤器" defaultValue="智能" className="block h-[17px] w-full appearance-none bg-[#f3f4f6] pl-[7px] text-[12px] leading-4 text-[#505257]">
        <option>智能</option>
      </select>
      <span className="pointer-events-none absolute inset-y-0 right-0 grid w-[14px] place-items-center border-l border-[#c6c8cc]">
        <Caret />
      </span>
    </div>
    <Watermark />
  </footer>
);

export default function App() {
  const [activeTab, setActiveTab] = useState('模型');

  return (
    <div className="min-h-screen border-r-2 border-[#0f4a8b] font-['Open_Sans','Noto_Sans_CJK_SC',sans-serif]">
      <Defs />
      <div className="flex min-h-screen flex-col border-b-4 border-r-[3px] border-[#939496] bg-[#fcfcfe]">
        <TitleBar />
        <TabRow active={activeTab} onSelect={setActiveTab} />
        <Ribbon />
        <div className="flex flex-1">
          <Canvas />
          <ModelTree />
        </div>
        <StatusBar />
      </div>
    </div>
  );
}
